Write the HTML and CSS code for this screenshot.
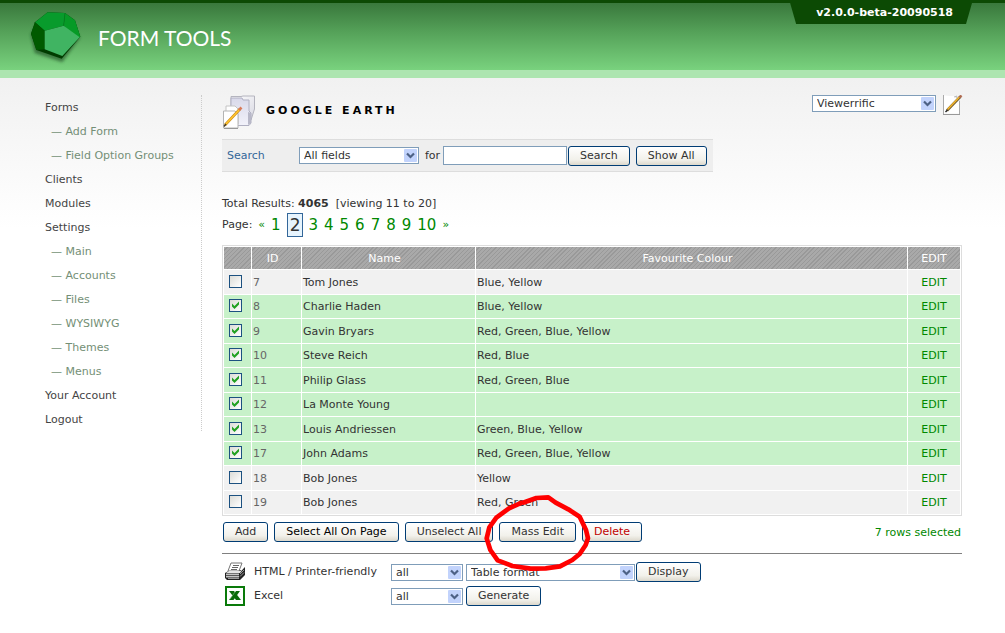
FILE: index.html
```html
<!DOCTYPE html>
<html lang="en">
<head>
<meta charset="utf-8">
<title>Form Tools - Google Earth</title>
<link rel="stylesheet" href="styles.css">
</head>
<body>
<header class="header">
  <div class="brand">
    <svg class="brand-mark" viewBox="0 0 168 162" aria-hidden="true">
      <defs><filter id="soft" x="-20%" y="-20%" width="140%" height="150%"><feGaussianBlur stdDeviation="5"/></filter></defs>
      <path d="M8 72 20 126 103 154 156 80 118 20 24 40Z" fill="#1c4a20" opacity=".6" filter="url(#soft)"/>
      <path d="M21 34 59 4 111 6 141 28 157 77 101 143 25 117 9 68Z" fill="#003c00"/>
      <path d="M59 4 111 6 107 44 50 59 21 34Z" fill="#089b2c"/>
      <path d="M111 6 141 28 157 77 141 87 107 44Z" fill="#069a26"/>
      <path d="M21 34 50 59 50 115 25 117 9 68Z" fill="#005a00"/>
      <path d="M50 59 107 44 155 79 103 135 50 115Z" fill="#40b462"/>
      <path d="M107 44 111 6" stroke="#087a20" stroke-width="2"/>
    </svg>
    <span class="brand-name">FORM TOOLS</span>
  </div>
  <div class="version">v2.0.0-beta-20090518</div>
</header>
<div class="page">
  <nav class="sidebar">
    <a href="#">Forms</a>
    <a class="sub" href="#">Add Form</a>
    <a class="sub" href="#">Field Option Groups</a>
    <a href="#">Clients</a>
    <a href="#">Modules</a>
    <a href="#">Settings</a>
    <a class="sub" href="#">Main</a>
    <a class="sub" href="#">Accounts</a>
    <a class="sub" href="#">Files</a>
    <a class="sub" href="#">WYSIWYG</a>
    <a class="sub" href="#">Themes</a>
    <a class="sub" href="#">Menus</a>
    <a href="#">Your Account</a>
    <a href="#">Logout</a>
  </nav>
  <main class="main">
    <div class="title-row">
      <svg class="title-icon" viewBox="0 0 34 34" aria-hidden="true">
        <defs>
          <linearGradient id="fold" x1="0" y1="0" x2="1" y2="1"><stop offset="0" stop-color="#fff"/><stop offset="1" stop-color="#d8d8e2"/></linearGradient>
          <linearGradient id="fold2" x1="0" y1="0" x2="0" y2="1"><stop offset="0" stop-color="#d9d9ea"/><stop offset="1" stop-color="#f2f2fa"/></linearGradient>
        </defs>
        <path d="M9 1.500H19L21 1H32.500V14L29 25H9Z" fill="url(#fold)" stroke="#b4b4be"/>
        <path d="M9 3H20L21 5H27V16L29 18V28L27 30.500H9Z" fill="url(#fold2)" stroke="#b0b0c2"/>
        <path d="M26 17V30L29 28V18Z" fill="#b8b8c8"/>
        <path d="M4 11H13L16 14V29H4Z" fill="#fff" stroke="#c4c4c4"/>
        <path d="M1.500 16H13L16 19V33H1.500Z" fill="#fff" stroke="#b4b4b4"/>
        <path d="M2 33.500H16" stroke="#999"/>
        <path d="M3 30 18 14" stroke="#c88a1c" stroke-width="2.600"/>
        <path d="M3 30 18 14" stroke="#ffc52e" stroke-width="1.600"/>
        <path d="M17 15 19.500 12.500" stroke="#d87a58" stroke-width="2.600"/>
        <path d="M2 31.500 4 29" stroke="#443a28" stroke-width="1.500"/>
      </svg>
      <h1 class="title">GOOGLE EARTH</h1>
      <select class="select view-select" aria-label="View"><option>Viewerrific</option></select>
      <button class="icon-button" aria-label="Edit view">
        <svg viewBox="0 0 20 20" aria-hidden="true">
          <path d="M.5 0V19.500H16.500V6L12 2" fill="#fafafa" stroke="#aaa"/>
          <path d="M1 1H14L16 4V18H1Z" fill="#fff"/>
          <path d="M0 19.500H17" stroke="#999"/>
          <path d="M11 2 14 1 13 3" fill="none" stroke="#bbb"/>
          <path d="M4 15.500 17.500 1.500" stroke="#6e5a30" stroke-width="2.600"/>
          <path d="M4.500 14.500 16.500 2" stroke="#f2b42a" stroke-width="1.600"/>
          <path d="M16.500 2.500 18.500 .5" stroke="#b06a50" stroke-width="2.400"/>
          <path d="M2.500 17 4.500 15" stroke="#222" stroke-width="1.400"/>
        </svg>
      </button>
    </div>
    <form class="search">
      <label class="search-label" for="field">Search</label>
      <select class="select field-select" id="field"><option>All fields</option></select>
      <label class="for-label" for="term">for</label>
      <input class="term" id="term" type="text">
      <button class="button" type="button">Search</button>
      <button class="button show-all" type="button">Show All</button>
    </form>
    <p class="totals">Total Results: <b>4065</b>&nbsp; [viewing 11 to 20]</p>
    <div class="pager">
      <span>Page:</span>
      <a class="arrow" href="#">«</a>
      <a href="#">1</a>
      <span class="current">2</span>
      <a href="#">3</a><a href="#">4</a><a href="#">5</a><a href="#">6</a><a href="#">7</a><a href="#">8</a><a href="#">9</a><a href="#">10</a>
      <a class="arrow" href="#">»</a>
    </div>
    <table class="results">
      <thead>
        <tr><th class="col-check"></th><th class="col-id">ID</th><th class="col-name">Name</th><th>Favourite Colour</th><th class="col-edit">EDIT</th></tr>
      </thead>
      <tbody>
        <tr><td class="check"><input type="checkbox" aria-label="Select 7"></td><td class="id">7</td><td>Tom Jones</td><td>Blue, Yellow</td><td class="edit"><a href="#">EDIT</a></td></tr>
        <tr class="on"><td class="check"><input type="checkbox" aria-label="Select 8" checked></td><td class="id">8</td><td>Charlie Haden</td><td>Blue, Yellow</td><td class="edit"><a href="#">EDIT</a></td></tr>
        <tr class="on"><td class="check"><input type="checkbox" aria-label="Select 9" checked></td><td class="id">9</td><td>Gavin Bryars</td><td>Red, Green, Blue, Yellow</td><td class="edit"><a href="#">EDIT</a></td></tr>
        <tr class="on"><td class="check"><input type="checkbox" aria-label="Select 10" checked></td><td class="id">10</td><td>Steve Reich</td><td>Red, Blue</td><td class="edit"><a href="#">EDIT</a></td></tr>
        <tr class="on"><td class="check"><input type="checkbox" aria-label="Select 11" checked></td><td class="id">11</td><td>Philip Glass</td><td>Red, Green, Blue</td><td class="edit"><a href="#">EDIT</a></td></tr>
        <tr class="on"><td class="check"><input type="checkbox" aria-label="Select 12" checked></td><td class="id">12</td><td>La Monte Young</td><td></td><td class="edit"><a href="#">EDIT</a></td></tr>
        <tr class="on"><td class="check"><input type="checkbox" aria-label="Select 13" checked></td><td class="id">13</td><td>Louis Andriessen</td><td>Green, Blue, Yellow</td><td class="edit"><a href="#">EDIT</a></td></tr>
        <tr class="on"><td class="check"><input type="checkbox" aria-label="Select 17" checked></td><td class="id">17</td><td>John Adams</td><td>Red, Green, Blue, Yellow</td><td class="edit"><a href="#">EDIT</a></td></tr>
        <tr><td class="check"><input type="checkbox" aria-label="Select 18"></td><td class="id">18</td><td>Bob Jones</td><td>Yellow</td><td class="edit"><a href="#">EDIT</a></td></tr>
        <tr><td class="check"><input type="checkbox" aria-label="Select 19"></td><td class="id">19</td><td>Bob Jones</td><td>Red, Green</td><td class="edit"><a href="#">EDIT</a></td></tr>
      </tbody>
    </table>
    <div class="actions">
      <button class="button">Add</button>
      <button class="button strong">Select All On Page</button>
      <button class="button">Unselect All</button>
      <span class="marked">
        <button class="button">Mass Edit</button>
        <svg class="mark" viewBox="75 66 324 243" aria-hidden="true">
          <path d="M190 99 232 84 268 82 290 98 328 118 362 140 381 180 387 205 380 225 362 252 340 270 303 289 260 295 215 296 160 288 116 271 94 240 83 205 91 172 112 143 150 115 190 97" fill="none" stroke="#f00" stroke-width="14" stroke-linejoin="round"/>
        </svg>
      </span>
      <button class="button danger">Delete</button>
      <span class="selected-count">7 rows selected</span>
    </div>
    <div class="exports">
      <div class="export-row">
        <svg class="export-icon" viewBox="0 0 20 20" aria-hidden="true">
          <path d="M0 11 5 8H17L20 5V13L15 18H2L0 16Z" fill="#222"/>
          <path d="M6 1H17L14 9H3Z" fill="#fff" stroke="#777"/>
          <path d="M8 3.500H14M7 5.500H13M6 7.500H12" stroke="#666"/>
          <path d="M1 11 4 9H15L18 7 15 11Z" fill="#e4e4e4"/>
          <path d="M1 11.500H14V15.500H1Z" fill="#c4c4c4"/>
          <path d="M1 13.500H14" stroke="#555"/>
          <path d="M3 16.500H14" stroke="#999"/>
          <path d="M15 12 19 8M15 14.500 19 10.500" stroke="#999"/>
        </svg>
        <label for="print-rows">HTML / Printer-friendly</label>
        <div class="export-controls">
          <select class="select rows-select" id="print-rows"><option>all</option></select>
          <select class="select format-select" aria-label="Format"><option>Table format</option></select>
          <button class="button joined">Display</button>
        </div>
      </div>
      <div class="export-row">
        <svg class="export-icon" viewBox="0 0 20 20" aria-hidden="true">
          <path d="M1 1H19V19H1Z" fill="#fff" stroke="#0a7a0a" stroke-width="2"/>
          <path d="M4 5H9L16 14H11Z" fill="#0a6b0a"/>
          <path d="M15 5H11L4 14H8.500Z" fill="#0a6b0a"/>
          <path d="M10 6 5 13" stroke="#8cc08c" stroke-width=".6"/>
        </svg>
        <label for="excel-rows">Excel</label>
        <div class="export-controls">
          <select class="select rows-select" id="excel-rows"><option>all</option></select>
          <button class="button">Generate</button>
        </div>
      </div>
    </div>
  </main>
</div>
</body>
</html>
```

FILE: styles.css
```css
* { box-sizing: border-box; }
body {
  margin: 0;
  background: #fff;
  color: #333;
  font: 11px/16px Verdana, "DejaVu Sans", sans-serif;
}
a { text-decoration: none; color: #080; }
button, select, input { font: inherit; color: inherit; margin: 0; }

.header {
  display: flex;
  justify-content: space-between;
  align-items: flex-start;
  height: 78px;
  padding: 0 33px 0 28px;
  border-top: 3px solid #0c4a04;
  border-bottom: 8px solid #ade5b0;
  background: linear-gradient(#39783c, #56a35a 45%, #79d27e);
}
.brand { display: flex; align-items: center; gap: 14px; padding-top: 8px; }
.brand-mark { width: 56px; height: 54px; }
.brand-name { color: #fff; font: 400 21px/32px Lato, sans-serif; }
.version {
  height: 21px;
  padding: 0 19px 0 26px;
  background: #0c4a04;
  clip-path: polygon(0 0, 100% 0, calc(100% - 6px) 100%, 6px 100%);
  color: #fff;
  font-weight: bold;
  line-height: 19px;
}

.page {
  display: flex;
  align-items: flex-start;
  gap: 20px;
  padding: 17px 43px 28px 45px;
  background: linear-gradient(#f1f1f1, #fff 150px);
}
.sidebar {
  display: flex;
  flex-direction: column;
  flex: 0 0 157px;
  border-right: 1px dotted #ccc;
}
.sidebar a { height: 24px; line-height: 26px; color: #444; }
.sidebar .sub { color: #748f76; padding-left: 6px; }
.sidebar .sub::before { content: "— "; }

.main { flex: 1; min-width: 0; }
.title-row { display: flex; align-items: flex-start; }
.title-icon { width: 34px; height: 34px; }
.title {
  flex: 1;
  margin: 0 0 0 10px;
  color: #000;
  font-size: 11px;
  line-height: 32px;
  letter-spacing: 3px;
}
.select {
  appearance: none;
  height: 17px;
  padding: 0 18px 0 4px;
  border: 1px solid #7f9db9;
  border-radius: 0;
  background: #fff url("data:image/svg+xml,%3Csvg xmlns='http://www.w3.org/2000/svg' width='13' height='13'%3E%3Crect width='13' height='13' rx='1' fill='%23c2d3fc'/%3E%3Cpath d='M3 4.500 6.500 8 10 4.500' fill='none' stroke='%234d6185' stroke-width='2.200'/%3E%3C/svg%3E") no-repeat right 1px center;
  line-height: 15px;
}
.view-select { width: 124px; }
.icon-button { width: 20px; height: 20px; margin: 0 -1px 0 7px; padding: 0; border: 0; background: none; }
.icon-button svg { display: block; width: 20px; height: 20px; }

.button {
  height: 20px;
  padding: 0 11px;
  border: 1px solid #003c74;
  border-radius: 3px;
  background: linear-gradient(#fff, #f2f1eb 70%, #dcd8cc);
  line-height: 18px;
  white-space: nowrap;
}
.strong { color: #000; }
.danger { color: #c00000; }

.search {
  display: flex;
  align-items: center;
  width: fit-content;
  height: 33px;
  margin-top: 10px;
  padding: 0 6px 0 5px;
  border: solid #ddd;
  border-width: 1px 0;
  background: #eee;
}
.search-label { width: 72px; color: #369; }
.field-select { width: 120px; }
.for-label { width: 24px; padding-left: 6px; }
.term { width: 124px; height: 19px; margin-right: 1px; border: 1px solid #7f9db9; background: #fff; }
.show-all { margin-left: 6px; }

.totals { margin: 24px 0 0; }
.pager { display: flex; align-items: center; gap: 6px; height: 26px; }
.pager a, .pager .current { font-size: 15px; line-height: 22px; }
.pager .arrow { font-size: 11px; }
.pager .current {
  margin: 0 -1px 0 0;
  padding: 0 2px;
  border: 1px solid #369;
  background: #e7f4fd;
  font-size: 17px;
}

.results {
  width: 100%;
  margin-top: 7px;
  border: 1px solid #ddd;
  border-collapse: separate;
  border-spacing: 1px;
  table-layout: fixed;
  background: #fff;
}
.results th {
  height: 22px;
  padding: 2px 8px 0 0;
  background: repeating-linear-gradient(135deg, #a9a9a9 0 2px, #999 2px 3px);
  color: #fff;
  font-weight: normal;
}
.results td { height: 23px; padding: 1px 1px 0; background: #f1f1f1; }
.results tr:nth-child(odd) td { height: 24px; }
.results .on td { background: #c7f1c9; }
.col-check { width: 27px; }
.col-id { width: 49px; }
.col-name { width: 173px; }
.results .col-edit { width: 52px; padding-right: 0; }
.results .id { color: #666; }
.results .edit { text-align: center; }
.check input {
  appearance: none;
  display: block;
  width: 13px;
  height: 13px;
  margin: 0 auto 3px 4px;
  border: 1px solid #1c5180;
  background: linear-gradient(135deg, #dcdcd7, #fff);
}
.check input:checked {
  background: url("data:image/svg+xml,%3Csvg xmlns='http://www.w3.org/2000/svg' width='11' height='11'%3E%3Cpath d='M2 3.500V6.500L4.500 9 9 4.500V1.500L4.500 6Z' fill='%2321a121'/%3E%3C/svg%3E"), linear-gradient(135deg, #dcdcd7, #fff);
}

.actions { display: flex; align-items: center; gap: 6px; padding: 6px 1px 11px; }
.marked { position: relative; display: flex; }
.mark { position: absolute; left: -15px; top: -30px; width: 108px; height: 81px; pointer-events: none; }
.selected-count { margin-left: auto; padding-top: 2px; color: #080; }

.exports { padding-top: 6px; border-top: 1px solid #808080; }
.export-row { display: grid; grid-template-columns: 32px 137px 1fr; align-items: center; height: 24px; }
.export-icon { width: 20px; height: 20px; margin-left: 3px; }
.export-controls { display: flex; align-items: center; gap: 3px; }
.rows-select { width: 72px; }
.format-select { width: 169px; }
.joined { margin-left: -2px; }
```
